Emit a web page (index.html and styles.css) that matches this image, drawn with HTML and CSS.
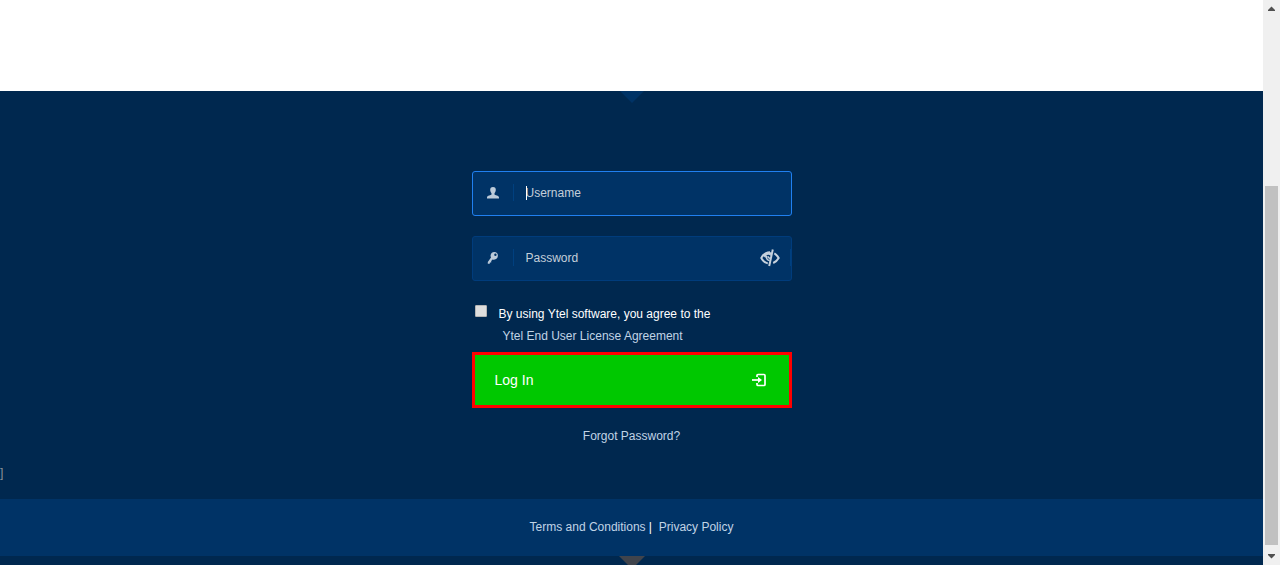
FILE: index.html
```html
<!DOCTYPE html>
<html lang="en">
<head>
<meta charset="utf-8">
<title>Log In</title>
<link rel="stylesheet" href="styles.css">
</head>
<body>
<div class="page">
  <header class="header"></header>
  <main class="login">
    <svg class="notch" width="24" height="12" viewBox="0 0 24 12" aria-hidden="true"><path d="M0 0h24L12 12z" fill="#003366"/></svg>
    <form class="form">
      <div class="field field-active">
        <label class="field-icon" for="username" aria-label="Username">
          <svg width="12" height="12" viewBox="0 0 12 12"><path d="M6 0C4 0 3.100 1.100 3.200 2.800c0 1.500.6 2.700 1.300 3.500v1.200C4.300 8.200 0 8.200 0 10.500v1h12v-1c0-2.300-4.300-2.300-4.500-3V6.300c.7-.8 1.300-2 1.300-3.500C8.900 1.100 8 0 6 0z" fill="#bccbda"/></svg>
        </label>
        <div class="input-wrap">
          <input class="input" id="username" type="text" placeholder="Username">
          <span class="caret"></span>
        </div>
      </div>
      <div class="field">
        <label class="field-icon" for="password" aria-label="Password">
          <svg width="12" height="12" viewBox="0 0 12 12"><path fill-rule="evenodd" d="M7.400 0C5 0 3.400 1.900 3.600 4.200L4 5.600.8 9.900v1.900h2v-1.400h1.400V8.900L5.600 7.500c3 .8 5.300-1.200 5.300-4C10.900 1.400 9.500 0 7.400 0zM8.400 1.500a1.200 1.200 0 1 1 0 2.400 1.200 1.200 0 0 1 0-2.400z" fill="#bccbda"/></svg>
        </label>
        <div class="input-wrap">
          <input class="input" id="password" type="password" placeholder="Password">
        </div>
        <button class="reveal" type="button" aria-label="Show password">
          <svg width="20" height="18" viewBox="0 0 20 18" fill="none" stroke="#c5d1dd"><path d="M10 3.200C6 3.200 3.200 5.300 1.300 9c1.500 2.900 3.600 4.700 6.500 5.400" stroke-width="2"/><path d="M3 6.500C5 4 8 3 11.500 3.300L10.500 7C9 5 6 5.500 5.500 9z" fill="#c5d1dd" stroke="none"/><path d="M6.500 6.800C6 9.500 7.500 11.500 9.600 11.500M8.200 7.200c0 1.400.7 2 1.900 2" stroke-width="1.500"/><path d="M12.800.5L9.200 17" stroke-width="2"/><path d="M14.300 4.300c1.800 1.100 3.200 2.700 4.400 4.700-1.300 2.300-3.100 4-5.500 5" stroke-width="2"/></svg>
        </button>
      </div>
      <div class="agree">
        <input class="check" id="agree" type="checkbox">
        <div class="agree-text">
          <label class="agree-label" for="agree">By using Ytel software, you agree to the</label>
          <a class="link agree-link" href="#">Ytel End User License Agreement</a>
        </div>
      </div>
      <button class="submit" type="submit">
        <span>Log In</span>
        <svg width="15" height="14" viewBox="0 0 15 14" fill="none" stroke="#fff" stroke-width="1.700"><path d="M5 4V2.500Q5 1.500 6 1.500h6q1 0 1 1v9q0 1-1 1H6q-1 0-1-1V10"/><path d="M0 7h8"/><path d="M6 4l4 3-4 3z" fill="#fff" stroke="none"/></svg>
      </button>
      <a class="link forgot" href="#">Forgot Password?</a>
    </form>
    <p class="stray">]</p>
  </main>
  <footer class="footer">
    <a class="link" href="#">Terms and Conditions</a><span class="bar">|</span><a class="link" href="#">Privacy Policy</a>
  </footer>
  <div class="bottom">
    <svg class="notch" width="26" height="13" viewBox="0 0 26 13" aria-hidden="true"><path d="M0 0h26L13 13z" fill="#40444c"/></svg>
  </div>
</div>
<div class="scrollbar" aria-hidden="true">
  <svg class="arrow" width="17" height="17" viewBox="0 0 17 17"><path d="M5 11h7v-1L8.500 6.500 5 10z" fill="#505050"/></svg>
  <div class="track"><div class="thumb"></div></div>
  <svg class="arrow" width="17" height="17" viewBox="0 0 17 17"><path d="M5 6h7v1l-3.500 3.500L5 7z" fill="#505050"/></svg>
</div>
</body>
</html>
```
FILE: styles.css
```css
* { box-sizing: border-box; }
body {
  display: flex;
  height: 100vh;
  margin: 0;
  overflow: hidden;
  background: #fff;
  color: #fff;
  font: 12px/22px "Liberation Sans", Arial, sans-serif;
}
.page { flex: 1; display: flex; flex-direction: column; min-width: 0; }
.header { flex: none; height: 91px; }
.login { position: relative; flex: none; padding: 80px 0 15px; background: #00284f; }
.notch { position: absolute; top: 0; left: 50%; transform: translateX(-50%); }
.form { display: flex; flex-direction: column; width: 320px; max-width: 100%; margin: 0 auto; }
.field {
  display: flex;
  align-items: center;
  height: 45px;
  margin-bottom: 20px;
  padding-bottom: 2px;
  border: 1px solid #003c7c;
  border-radius: 3px;
  background: #003366;
}
.field-active { border-color: #2080f0; }
.field-icon {
  display: flex;
  align-items: center;
  justify-content: center;
  width: 41px;
  height: 17px;
  border-right: 1px solid #00407f;
}
.input-wrap { position: relative; flex: 1; min-width: 0; }
.input {
  display: block;
  width: 100%;
  height: 41px;
  padding: 0 12px;
  border: 0;
  outline: 0;
  background: transparent;
  color: #fff;
  font: inherit;
}
.input::placeholder { color: #c4cfda; opacity: 1; }
.caret { position: absolute; left: 12px; top: 14px; width: 1px; height: 14px; background: #fff; }
.reveal {
  display: flex;
  align-items: center;
  height: 17px;
  padding: 0 10px 0 0;
  border: 0;
  border-right: 1px solid #00407f;
  background: none;
}
.agree { display: flex; gap: 12px; padding: 2px 0 5px 3px; }
.check {
  appearance: none;
  width: 12px;
  height: 12px;
  margin: 2px 0 0;
  border: 1px solid #b4b4b4;
  border-radius: 1px;
  background: #dedede;
}
.check:checked { background: #2080f0; }
.agree-text { display: flex; flex-direction: column; }
.agree-label { color: #fff; }
.agree-link { padding-left: 4px; }
.link { color: #c0d4e6; text-decoration: none; }
.submit {
  display: flex;
  align-items: center;
  justify-content: space-between;
  height: 56px;
  padding: 0 22px 0 20px;
  border: 3px solid #f00;
  background: #00c800;
  color: #fff;
  font: 14px/20px "Liberation Sans", Arial, sans-serif;
}
.forgot { margin-top: 17px; text-align: center; }
.stray { margin: 15px 0 0; color: #8c9299; }
.footer {
  display: flex;
  flex: none;
  justify-content: center;
  padding: 17px 0 18px;
  background: #003366;
}
.bar { padding: 0 7px 0 3px; }
.bottom { position: relative; flex: 1; overflow: hidden; background: #00284f; }
.scrollbar { display: flex; flex: none; flex-direction: column; width: 17px; background: #f0f0f0; }
.arrow { flex: none; }
.track { flex: 1; padding: 169px 2px 3px; }
.thumb { height: 100%; background: #c1c1c1; }
```
